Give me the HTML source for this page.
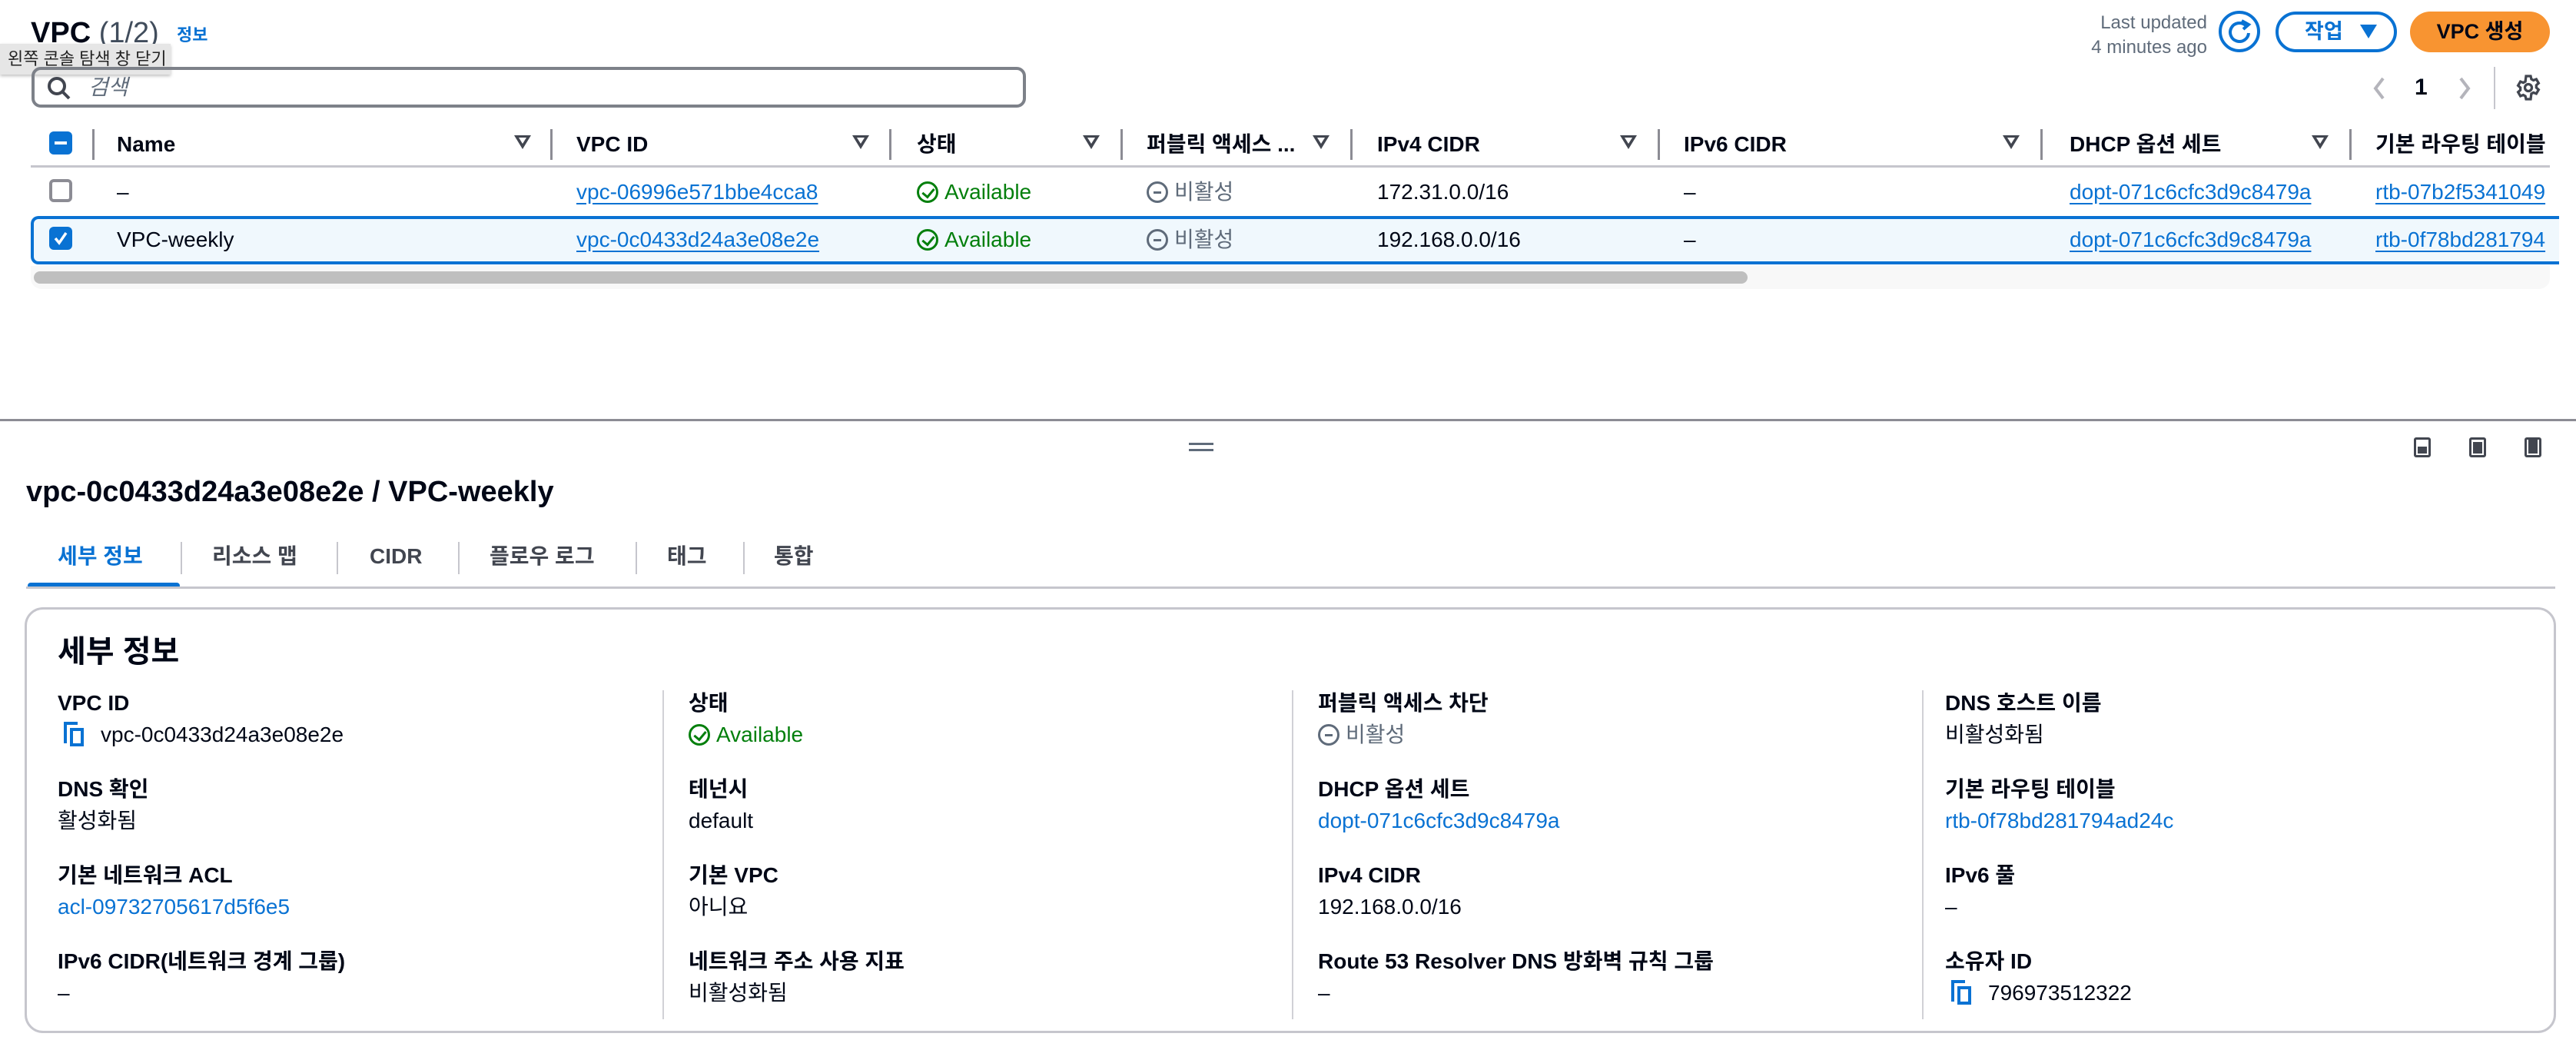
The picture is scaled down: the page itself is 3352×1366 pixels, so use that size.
<!DOCTYPE html>
<html><head><meta charset="utf-8"><style>
*{box-sizing:border-box;margin:0;padding:0}
body{width:3352px;height:1366px;background:#fff;position:relative;overflow:hidden;font-family:"Liberation Sans","Noto Sans CJK KR",sans-serif;color:#000716;font-size:28px;line-height:36px}
.a{position:absolute;white-space:nowrap}
.b{font-weight:bold}
.lk{color:#0972d3;text-decoration:underline;text-underline-offset:5px}
.lb{color:#0972d3}
.g{color:#037f0c}
.sep{position:absolute;width:3px;background:#8c8c94;height:40px;top:168px}
.tri{position:absolute;top:176px;width:0;height:0;border-left:11px solid transparent;border-right:11px solid transparent;border-top:18px solid #424650}
.tri:after{content:"";position:absolute;left:-5px;top:-15px;border-left:5px solid transparent;border-right:5px solid transparent;border-top:8px solid #fff}
.cb{position:absolute;width:30px;height:30px;border-radius:6px}
.ok{display:inline-block;width:28px;height:28px;border:3px solid #037f0c;border-radius:50%;vertical-align:-5px;margin-right:8px;position:relative}
.ok:after{content:"";position:absolute;left:7px;top:3px;width:7px;height:12px;border-right:3px solid #037f0c;border-bottom:3px solid #037f0c;transform:rotate(40deg)}
.no{display:inline-block;width:28px;height:28px;border:3px solid #5f6b7a;border-radius:50%;vertical-align:-5px;margin-right:8px;position:relative}
.no:after{content:"";position:absolute;left:6px;top:10px;width:10px;height:3px;background:#5f6b7a}
.gr{color:#5f6b7a}
.lab{font-weight:bold}
.cp{display:inline-block;width:26px;height:32px;position:relative;vertical-align:-6px;margin-right:22px;margin-left:8px}
.cp:before{content:"";position:absolute;left:0;top:0;width:14px;height:24px;border-left:4px solid #0972d3;border-top:4px solid #0972d3}
.cp:after{content:"";position:absolute;left:8px;top:8px;width:18px;height:24px;border:4px solid #0972d3;box-sizing:border-box}
.vs{position:absolute;width:2px;background:#d1d1d6;top:898px;height:428px}
</style></head><body>

<div class="a b" style="left:40px;top:20px;font-size:38px;line-height:46px">VPC <span style="font-weight:normal;color:#414d5c">(1/2)</span></div>
<div class="a lb b" style="left:230px;top:32px;font-size:22px;line-height:28px">정보</div>
<div class="a" style="left:0;top:57px;width:222px;height:40px;background:#e6e6e6;box-shadow:0 2px 4px rgba(0,0,0,.25);font-size:22px;line-height:40px;padding-left:10px;color:#222">왼쪽 콘솔 탐색 창 닫기</div>

<div class="a" style="left:41px;top:87px;width:1294px;height:53px;border:4px solid #7d8189;border-radius:12px"></div>
<svg class="a" style="left:60px;top:98px" width="34" height="34" viewBox="0 0 34 34"><circle cx="14" cy="14" r="10" fill="none" stroke="#424650" stroke-width="4"/><line x1="21" y1="21" x2="30" y2="30" stroke="#424650" stroke-width="4"/></svg>
<div class="a" style="left:115px;top:96px;font-style:italic;color:#5f6b7a">검색</div>

<div class="a" style="left:2720px;top:14px;font-size:24px;color:#5f6b7a;text-align:right;width:152px;line-height:32px">Last updated<br>4 minutes ago</div>
<svg class="a" style="left:2886px;top:13px" width="56" height="56" viewBox="0 0 56 56"><circle cx="28" cy="28" r="25" fill="none" stroke="#0972d3" stroke-width="4"/><path d="M36 20 A12 12 0 1 0 40 30" fill="none" stroke="#0972d3" stroke-width="4"/><path d="M31 14 L40 19 L33 25" fill="none" stroke="#0972d3" stroke-width="4"/></svg>
<div class="a b lb" style="left:2961px;top:15px;width:158px;height:53px;border:4px solid #0972d3;border-radius:28px;line-height:45px;padding-left:34px;font-size:27px">작업</div>
<div class="a" style="left:3071px;top:32px;border-left:11px solid transparent;border-right:11px solid transparent;border-top:18px solid #0972d3"></div>
<div class="a b" style="left:3136px;top:15px;width:182px;height:53px;background:#f89431;border-radius:28px;line-height:53px;text-align:center;font-size:27px">VPC 생성</div>

<svg class="a" style="left:3085px;top:98px" width="22" height="34" viewBox="0 0 22 34"><path d="M16 4 L6 17 L16 30" fill="none" stroke="#b4b4bb" stroke-width="4"/></svg>
<div class="a b" style="left:3142px;top:96px;font-size:30px">1</div>
<svg class="a" style="left:3196px;top:98px" width="22" height="34" viewBox="0 0 22 34"><path d="M6 4 L16 17 L6 30" fill="none" stroke="#b4b4bb" stroke-width="4"/></svg>
<div class="a" style="left:3245px;top:87px;width:2px;height:55px;background:#c6c6cd"></div>
<svg class="a" style="left:3272px;top:96px" width="36" height="36" viewBox="0 0 24 24"><path fill="none" stroke="#424650" stroke-width="2.2" d="M10 2h4l.6 2.6 1.8 1 2.5-.9 2 3.4-2 1.8v2.1l2 1.8-2 3.4-2.5-.9-1.8 1L14 22h-4l-.6-2.6-1.8-1-2.5.9-2-3.4 2-1.8v-2.1l-2-1.8 2-3.4 2.5.9 1.8-1z"/><circle cx="12" cy="12" r="3" fill="none" stroke="#424650" stroke-width="2.2"/></svg>

<!-- table header -->
<div class="cb" style="left:64px;top:171px;background:#0972d3"></div>
<div class="a" style="left:71px;top:184px;width:16px;height:4px;background:#fff"></div>
<div class="sep" style="left:120px"></div>
<div class="a b" style="left:152px;top:170px">Name</div><div class="tri" style="left:669px"></div>
<div class="sep" style="left:716px"></div>
<div class="a b" style="left:750px;top:170px">VPC ID</div><div class="tri" style="left:1109px"></div>
<div class="sep" style="left:1157px"></div>
<div class="a b" style="left:1193px;top:170px">상태</div><div class="tri" style="left:1409px"></div>
<div class="sep" style="left:1458px"></div>
<div class="a b" style="left:1492px;top:170px">퍼블릭 액세스 ...</div><div class="tri" style="left:1708px"></div>
<div class="sep" style="left:1757px"></div>
<div class="a b" style="left:1792px;top:170px">IPv4 CIDR</div><div class="tri" style="left:2108px"></div>
<div class="sep" style="left:2157px"></div>
<div class="a b" style="left:2191px;top:170px">IPv6 CIDR</div><div class="tri" style="left:2606px"></div>
<div class="sep" style="left:2655px"></div>
<div class="a b" style="left:2693px;top:170px">DHCP 옵션 세트</div><div class="tri" style="left:3008px"></div>
<div class="sep" style="left:3057px"></div>
<div class="a b" style="left:3091px;top:170px;width:227px;overflow:hidden">기본 라우팅 테이블</div>
<div class="a" style="left:40px;top:215px;width:3278px;height:3px;background:#c6c6cd"></div>

<!-- row 1 -->
<div class="cb" style="left:64px;top:233px;border:4px solid #8c8c94"></div>
<div class="a" style="left:152px;top:232px">–</div>
<div class="a lk" style="left:750px;top:232px">vpc-06996e571bbe4cca8</div>
<div class="a g" style="left:1193px;top:232px"><span class="ok"></span>Available</div>
<div class="a gr" style="left:1492px;top:232px"><span class="no"></span>비활성</div>
<div class="a" style="left:1792px;top:232px">172.31.0.0/16</div>
<div class="a" style="left:2191px;top:232px">–</div>
<div class="a lk" style="left:2693px;top:232px">dopt-071c6cfc3d9c8479a</div>
<div class="a lk" style="left:3091px;top:232px;width:227px;overflow:hidden">rtb-07b2f5341049</div>

<!-- row 2 -->
<div class="a" style="left:40px;top:281px;width:3290px;height:63px;background:#f0f8fd;border:4px solid #0972d3;border-right:none;border-radius:10px 0 0 10px"></div>
<div class="cb" style="left:64px;top:295px;background:#0972d3"></div>
<svg class="a" style="left:66px;top:297px" width="26" height="26" viewBox="0 0 26 26"><path d="M6 13 L11 19 L20 6" fill="none" stroke="#fff" stroke-width="3.5"/></svg>
<div class="a" style="left:152px;top:294px">VPC-weekly</div>
<div class="a lk" style="left:750px;top:294px">vpc-0c0433d24a3e08e2e</div>
<div class="a g" style="left:1193px;top:294px"><span class="ok"></span>Available</div>
<div class="a gr" style="left:1492px;top:294px"><span class="no"></span>비활성</div>
<div class="a" style="left:1792px;top:294px">192.168.0.0/16</div>
<div class="a" style="left:2191px;top:294px">–</div>
<div class="a lk" style="left:2693px;top:294px">dopt-071c6cfc3d9c8479a</div>
<div class="a lk" style="left:3091px;top:294px;width:227px;overflow:hidden">rtb-0f78bd281794</div>

<div class="a" style="left:40px;top:346px;width:3278px;height:30px;background:#f8f8f8;border-radius:0 0 14px 14px"></div>
<div class="a" style="left:44px;top:353px;width:2230px;height:16px;background:#bfbfbf;border-radius:8px"></div>

<!-- divider -->
<div class="a" style="left:0;top:545px;width:3352px;height:3px;background:#8c8c94"></div>
<div class="a" style="left:1547px;top:576px;width:32px;height:3px;background:#5f6b7a"></div>
<div class="a" style="left:1547px;top:584px;width:32px;height:3px;background:#5f6b7a"></div>
<div class="a" style="left:3141px;top:569px;width:22px;height:26px;border:3px solid #424650;border-radius:3px"><div style="position:absolute;left:2px;bottom:2px;width:12px;height:9px;background:#424650"></div></div>
<div class="a" style="left:3213px;top:569px;width:22px;height:26px;border:3px solid #424650;border-radius:3px"><div style="position:absolute;left:2px;bottom:2px;width:12px;height:15px;background:#424650"></div></div>
<div class="a" style="left:3285px;top:569px;width:22px;height:26px;border:3px solid #424650;border-radius:3px"><div style="position:absolute;left:2px;bottom:2px;width:12px;height:18px;background:#424650"></div></div>

<div class="a b" style="left:34px;top:617px;font-size:38px;line-height:46px">vpc-0c0433d24a3e08e2e / VPC-weekly</div>

<!-- tabs -->
<div class="a b lb" style="left:75px;top:706px">세부 정보</div>
<div class="a" style="left:235px;top:705px;width:2px;height:42px;background:#c6c6cd"></div>
<div class="a b" style="left:276px;top:706px;color:#424650">리소스 맵</div>
<div class="a" style="left:438px;top:705px;width:2px;height:42px;background:#c6c6cd"></div>
<div class="a b" style="left:481px;top:706px;color:#424650">CIDR</div>
<div class="a" style="left:596px;top:705px;width:2px;height:42px;background:#c6c6cd"></div>
<div class="a b" style="left:637px;top:706px;color:#424650">플로우 로그</div>
<div class="a" style="left:827px;top:705px;width:2px;height:42px;background:#c6c6cd"></div>
<div class="a b" style="left:868px;top:706px;color:#424650">태그</div>
<div class="a" style="left:967px;top:705px;width:2px;height:42px;background:#c6c6cd"></div>
<div class="a b" style="left:1007px;top:706px;color:#424650">통합</div>
<div class="a" style="left:36px;top:758px;width:198px;height:8px;background:#0972d3;border-radius:4px"></div>
<div class="a" style="left:34px;top:763px;width:3291px;height:3px;background:#c6c6cd"></div>

<!-- container -->
<div class="a" style="left:32px;top:790px;width:3294px;height:554px;border:3px solid #c6c6cd;border-radius:24px"></div>
<div class="a b" style="left:75px;top:824px;font-size:40px;line-height:48px">세부 정보</div>
<div class="vs" style="left:862px"></div><div class="vs" style="left:1681px"></div><div class="vs" style="left:2501px"></div>

<div class="a lab" style="left:75px;top:897px">VPC ID</div>
<div class="a" style="left:75px;top:938px"><span class="cp"></span>vpc-0c0433d24a3e08e2e</div>
<div class="a lab" style="left:75px;top:1009px">DNS 확인</div>
<div class="a" style="left:75px;top:1050px">활성화됨</div>
<div class="a lab" style="left:75px;top:1121px">기본 네트워크 ACL</div>
<div class="a lb" style="left:75px;top:1162px">acl-09732705617d5f6e5</div>
<div class="a lab" style="left:75px;top:1233px">IPv6 CIDR(네트워크 경계 그룹)</div>
<div class="a" style="left:75px;top:1274px">–</div>

<div class="a lab" style="left:896px;top:897px">상태</div>
<div class="a g" style="left:896px;top:938px"><span class="ok"></span>Available</div>
<div class="a lab" style="left:896px;top:1009px">테넌시</div>
<div class="a" style="left:896px;top:1050px">default</div>
<div class="a lab" style="left:896px;top:1121px">기본 VPC</div>
<div class="a" style="left:896px;top:1162px">아니요</div>
<div class="a lab" style="left:896px;top:1233px">네트워크 주소 사용 지표</div>
<div class="a" style="left:896px;top:1274px">비활성화됨</div>

<div class="a lab" style="left:1715px;top:897px">퍼블릭 액세스 차단</div>
<div class="a gr" style="left:1715px;top:938px"><span class="no"></span>비활성</div>
<div class="a lab" style="left:1715px;top:1009px">DHCP 옵션 세트</div>
<div class="a lb" style="left:1715px;top:1050px">dopt-071c6cfc3d9c8479a</div>
<div class="a lab" style="left:1715px;top:1121px">IPv4 CIDR</div>
<div class="a" style="left:1715px;top:1162px">192.168.0.0/16</div>
<div class="a lab" style="left:1715px;top:1233px">Route 53 Resolver DNS 방화벽 규칙 그룹</div>
<div class="a" style="left:1715px;top:1274px">–</div>

<div class="a lab" style="left:2531px;top:897px">DNS 호스트 이름</div>
<div class="a" style="left:2531px;top:938px">비활성화됨</div>
<div class="a lab" style="left:2531px;top:1009px">기본 라우팅 테이블</div>
<div class="a lb" style="left:2531px;top:1050px">rtb-0f78bd281794ad24c</div>
<div class="a lab" style="left:2531px;top:1121px">IPv6 풀</div>
<div class="a" style="left:2531px;top:1162px">–</div>
<div class="a lab" style="left:2531px;top:1233px">소유자 ID</div>
<div class="a" style="left:2531px;top:1274px"><span class="cp"></span>796973512322</div>
</body></html>
